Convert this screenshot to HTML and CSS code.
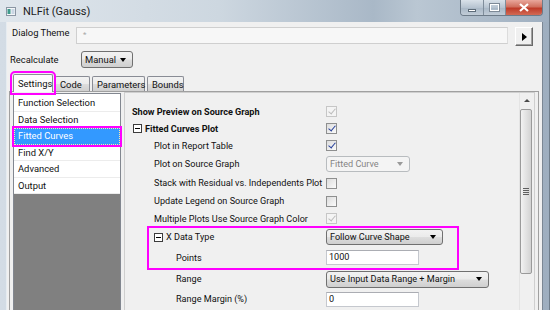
FILE: index.html
```html
<!DOCTYPE html>
<html lang="en">

<head>
    <meta charset="UTF-8">
    <title>NLFit (Gauss)</title>
    <link rel="stylesheet" href="styles.css">
</head>

<body>
    <div class="window">
        <div class="titlebar">
            <svg class="appicon" width="10" height="9" viewBox="0 0 10 9">
                <rect x="0.5" y="0.5" width="9" height="8" fill="#f4f6f8" stroke="#8a96a3" />
                <rect x="1.5" y="2" width="3" height="5" fill="#3f9a8c" />
                <rect x="5.5" y="2" width="3" height="5" fill="#c9d6e4" />
            </svg>
            <span class="title">NLFit (Gauss)</span>
            <div class="controls">
                <div class="ctl min"><span></span></div>
                <div class="ctl max"><span></span></div>
                <div class="ctl close">
                    <svg width="12" height="9" viewBox="0 0 12 9">
                        <path d="M2 1 L10 8 M10 1 L2 8" stroke="#ffffff" stroke-width="2.2" />
                    </svg>
                </div>
            </div>
        </div>

        <div class="client">
            <div class="theme-row">
                <span class="theme-label">Dialog Theme</span>
                <div class="theme-input">*</div>
                <div class="arrow-btn"><span></span></div>
            </div>

            <div class="recalc-row">
                <span class="recalc-label">Recalculate</span>
                <div class="combo manual">Manual<i class="tri"></i></div>
            </div>

            <div class="tabs">
                <div class="tab active">Settings</div>
                <div class="tab code">Code</div>
                <div class="tab params">Parameters</div>
                <div class="tab bounds">Bounds</div>
            </div>

            <div class="panel">
                <div class="nav">
                    <div class="nav-list">
                        <div class="item">Function Selection</div>
                        <div class="item">Data Selection</div>
                        <div class="item selected">Fitted Curves</div>
                        <div class="item">Find X/Y</div>
                        <div class="item">Advanced</div>
                        <div class="item">Output</div>
                    </div>
                    <div class="nav-empty"></div>
                </div>

                <div class="tree">
                    <div class="rows">
                        <div class="row h17">
                            <div class="lbl lv0 bold">Show Preview on Source Graph</div>
                            <div class="val"><span class="chk disabled on"></span></div>
                        </div>
                        <div class="row h17">
                            <div class="lbl lv0x bold"><span class="exp"></span>Fitted Curves Plot</div>
                            <div class="val"><span class="chk on"></span></div>
                        </div>
                        <div class="row h17">
                            <div class="lbl lv1">Plot in Report Table</div>
                            <div class="val"><span class="chk on"></span></div>
                        </div>
                        <div class="row h20">
                            <div class="lbl lv1">Plot on Source Graph</div>
                            <div class="val"><div class="combo disabled fitted">Fitted Curve<i class="tri"></i></div></div>
                        </div>
                        <div class="row h18">
                            <div class="lbl lv1">Stack with Residual vs. Independents Plot</div>
                            <div class="val"><span class="chk"></span></div>
                        </div>
                        <div class="row h18">
                            <div class="lbl lv1">Update Legend on Source Graph</div>
                            <div class="val"><span class="chk"></span></div>
                        </div>
                        <div class="row h17">
                            <div class="lbl lv1">Multiple Plots Use Source Graph Color</div>
                            <div class="val"><span class="chk disabled on"></span></div>
                        </div>
                        <div class="group">
                            <div class="row h20">
                                <div class="lbl lv1x"><span class="exp"></span>X Data Type</div>
                                <div class="val"><div class="combo follow">Follow Curve Shape<i class="tri"></i></div></div>
                            </div>
                            <div class="row h21">
                                <div class="lbl lv2">Points</div>
                                <div class="val"><div class="edit">1000</div></div>
                            </div>
                        </div>
                        <div class="row h22">
                            <div class="lbl lv2">Range</div>
                            <div class="val"><div class="combo range">Use Input Data Range + Margin<i class="tri"></i></div></div>
                        </div>
                        <div class="row h18">
                            <div class="lbl lv2">Range Margin (%)</div>
                            <div class="val"><div class="edit">0</div></div>
                        </div>
                    </div>
                    <div class="vscroll">
                        <div class="up"><span></span></div>
                        <div class="thumb"><span class="grip"></span></div>
                    </div>
                </div>
            </div>
        </div>
    </div>
</body>

</html>
```

FILE: styles.css
```css
* {
    box-sizing: border-box;
}

body {
    margin: 0;
    background: #ffffff;
    font-family: Roboto, "Liberation Sans", Arial, sans-serif;
    font-size: 9.1px;
    color: #111;
}

.window {
    width: 550px;
    height: 310px;
    display: flex;
    flex-direction: column;
    overflow: hidden;
    background: linear-gradient(to right, #d3dce5 0%, #c4d0db 45%, #aab9c8 70%, #b6c3cf 78%, #9eaebf 100%);
    border-right: 1px solid #6f7d8b;
}

/* title bar */
.titlebar {
    height: 22px;
    display: flex;
    align-items: center;
    padding-left: 6px;
    background: linear-gradient(to right, #dfe6ec 0%, #cdd7e0 40%, #a9b8c7 68%, #bac7d3 76%, #9fafc0 100%);
    position: relative;
}

.appicon {
    margin-top: 1px;
}

.title {
    margin-left: 7px;
    font-size: 11px;
    color: #1b1b1b;
}

.controls {
    position: absolute;
    top: 0;
    left: 460px;
    display: flex;
    height: 16px;
    border: 1px solid #6d7b89;
    border-top: none;
    border-radius: 0 0 4px 4px;
    overflow: hidden;
}

.ctl {
    height: 15px;
    display: flex;
    align-items: center;
    justify-content: center;
    background: linear-gradient(#d9e1e9, #b7c4d1 50%, #a8b7c6 51%, #c1ccd7);
    border-right: 1px solid #7f8d9b;
}

.ctl.min {
    width: 23px;
}

.ctl.min span {
    width: 8px;
    height: 3px;
    margin-top: 5px;
    background: #ffffff;
    border: 1px solid #5d6b78;
}

.ctl.max {
    width: 22px;
}

.ctl.max span {
    width: 9px;
    height: 7px;
    border: 1px solid #ffffff;
    outline: 1px solid #7d8996;
}

.ctl.close {
    width: 36px;
    border-right: none;
    background: linear-gradient(#e9a79c, #d0705f 45%, #bf3b29 55%, #d26a55);
}

/* client area */
.client {
    flex: 1;
    margin: 0 6px 0 6px;
    background: #f0f0f0;
    border-left: 1px solid #e6ecf1;
    border-right: 1px solid #7b8794;
    display: flex;
    flex-direction: column;
}

.theme-row {
    display: flex;
    align-items: flex-start;
    margin-top: 5px;
    padding-left: 5px;
    height: 19px;
}

.theme-label {
    width: 64px;
    line-height: 12px;
    font-size: 9.4px;
}

.theme-input {
    width: 432px;
    height: 17px;
    background: #f7f7f7;
    border: 1px solid #cfcfcf;
    border-right-color: #dcdcdc;
    padding: 2px 0 0 6px;
    color: #a8a8a8;
    font-size: 8px;
}

.arrow-btn {
    margin-left: 7px;
    width: 18px;
    height: 19px;
    border: 1px solid;
    border-color: #ffffff #6a6a6a #6a6a6a #ffffff;
    box-shadow: inset -1px -1px 0 #a0a0a0;
    background: #f0f0f0;
    display: flex;
    align-items: center;
    justify-content: center;
}

.arrow-btn span {
    width: 0;
    height: 0;
    border-top: 4px solid transparent;
    border-bottom: 4px solid transparent;
    border-left: 5px solid #000;
}

.recalc-row {
    display: flex;
    align-items: center;
    margin-top: 5px;
    padding-left: 3px;
    height: 17px;
    font-size: 9.4px;
}

.recalc-label {
    width: 71px;
}

/* combos */
.combo {
    display: flex;
    align-items: center;
    justify-content: space-between;
    height: 16px;
    padding: 0 6px 0 3px;
    border: 1px solid #707070;
    border-radius: 3px;
    background: linear-gradient(#f2f2f2, #ebebeb 48%, #dddddd 52%, #cfcfcf);
}

.tri {
    width: 0;
    height: 0;
    border-left: 3.5px solid transparent;
    border-right: 3.5px solid transparent;
    border-top: 4px solid #000;
}

.combo.manual {
    width: 52px;
    height: 17px;
}

.combo.disabled {
    background: #f4f4f4;
    border-color: #b8bcbf;
    color: #858585;
}

.combo.disabled .tri {
    border-top-color: #9a9a9a;
}

.combo.fitted {
    width: 84px;
}

.combo.follow {
    width: 117px;
}

.combo.range {
    width: 163px;
    height: 17px;
}

.edit {
    width: 93px;
    height: 15px;
    padding: 1px 0 0 2px;
    background: #ffffff;
    border: 1px solid #c5c8ce;
    border-top-color: #abadb3;
}

/* tabs */
.tabs {
    display: flex;
    align-items: flex-end;
    margin-top: 6px;
    height: 17px;
    padding-left: 6px;
    font-size: 9.4px;
}

.tab {
    height: 15px;
    padding: 2px 0 0 4px;
    margin-right: 2px;
    border: 1px solid #898c95;
    border-bottom: none;
    border-radius: 2px 2px 0 0;
    background: linear-gradient(#f2f2f2, #ebebeb 50%, #dddddd 50%, #cfcfcf);
}

.tab.active {
    width: 40px;
    height: 18px;
    margin-bottom: -1px;
    padding-top: 3px;
    background: #fcfcfc;
    position: relative;
    outline: 2px solid #ff00ff;
    outline-offset: 1px;
}

.tab.code {
    width: 35px;
}

.tab.params {
    width: 53px;
}

.tab.bounds {
    width: 37px;
}

/* panel */
.panel {
    flex: 1;
    display: flex;
    margin: 0 3px 0 2px;
    border: 1px solid #a0a0a0;
    border-bottom: none;
    min-height: 0;
}

.nav {
    width: 108px;
    margin: 1px 0 0 3px;
    border: 1px solid #828790;
    border-bottom: none;
    display: flex;
    flex-direction: column;
    font-size: 9.4px;
}

.nav-list {
    background: #ffffff;
    padding-top: 1px;
}

.item {
    height: 16.5px;
    padding: 2px 0 0 4px;
    border-bottom: 1px solid #ececec;
}

.item.selected {
    background: #3399ff;
    color: #ffffff;
    border: 1px dotted #ffe9a8;
    padding: 1px 0 0 3px;
    outline: 2px solid #ff00ff;
}

.nav-empty {
    flex: 1;
    background: #808080;
}

.tree {
    width: 411px;
    margin-left: 3px;
    border: 1px solid #cfcfcf;
    border-bottom: none;
    display: flex;
}

.rows {
    flex: 1;
    padding-top: 10px;
}

.row {
    display: flex;
    align-items: center;
}

.h17 { height: 17px; }
.h18 { height: 18px; }
.h20 { height: 20px; }
.h21 { height: 21px; }
.h22 { height: 22px; }

.lbl {
    width: 201px;
    display: flex;
    align-items: center;
    white-space: nowrap;
}

.bold {
    font-weight: bold;
}

.lv0 { padding-left: 7px; }
.lv0x { padding-left: 8px; }
.lv1 { padding-left: 29px; }
.lv1x { padding-left: 29px; }
.lv2 { padding-left: 51px; }

.exp {
    width: 9px;
    height: 9px;
    margin-right: 3px;
    border: 1px solid #3c3c3c;
    background: #ffffff;
    position: relative;
}

.exp::after {
    content: "";
    position: absolute;
    left: 1px;
    top: 3px;
    width: 5px;
    height: 1px;
    background: #000;
}

.val {
    display: flex;
    align-items: center;
}

.chk {
    width: 11px;
    height: 11px;
    border: 1px solid #8e8f8f;
    background: linear-gradient(135deg, #dcdcdc, #fbfbfb);
    position: relative;
}

.chk.on::after {
    content: "";
    position: absolute;
    left: 3px;
    top: 0px;
    width: 3px;
    height: 6px;
    border-right: 1.5px solid #27409a;
    border-bottom: 1.5px solid #27409a;
    transform: rotate(40deg);
}

.chk.disabled {
    border-color: #c6c6c6;
    background: #f4f4f4;
}

.chk.disabled.on::after {
    border-color: #bcbcbc;
}

.group {
    position: relative;
}

.group::after {
    content: "";
    position: absolute;
    left: 22px;
    top: -1px;
    width: 308px;
    height: 40px;
    border: 2px solid #ff00ff;
}

/* scrollbar */
.vscroll {
    width: 14px;
    margin-right: 1px;
    background: #f0f0f0;
    border-left: 1px solid #e4e4e4;
}

.up {
    height: 15px;
    display: flex;
    align-items: center;
    justify-content: center;
}

.up span {
    width: 0;
    height: 0;
    border-left: 3px solid transparent;
    border-right: 3px solid transparent;
    border-bottom: 3px solid #4a4a4a;
}

.thumb {
    margin: 1px 1px 0 0;
    height: 165px;
    border: 1px solid #9a9a9a;
    border-radius: 2px;
    background: linear-gradient(to right, #f2f2f2, #e2e2e2 50%, #d2d2d2);
    display: flex;
    align-items: center;
    justify-content: center;
}

.grip {
    width: 6px;
    height: 7px;
    background: repeating-linear-gradient(#5f5f5f 0 1px, transparent 1px 2px);
}
```
